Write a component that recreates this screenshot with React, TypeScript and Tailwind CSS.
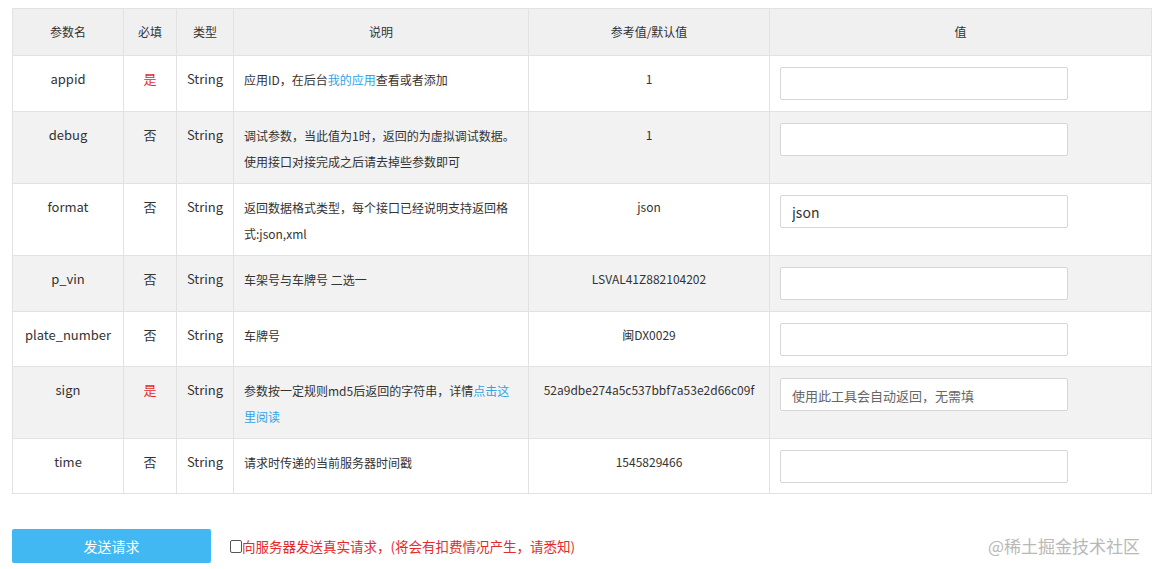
const F = { fontFamily: '"Microsoft YaHei","Noto Sans CJK SC","Liberation Sans",sans-serif' };

type Row = { name: string; req: boolean; desc: React.ReactNode; ref: string; val?: string; ph?: string; h: number; gray: boolean };

const rows: Row[] = [
  { name: 'appid', req: true, desc: <>应用ID，在后台<span className="text-[#2fa4e7]">我的应用</span>查看或者添加</>, ref: '1', h: 56, gray: false },
  { name: 'debug', req: false, desc: <>调试参数，当此值为1时，返回的为虚拟调试数据。使用接口对接完成之后请去掉些参数即可</>, ref: '1', h: 72, gray: true },
  { name: 'format', req: false, desc: <>返回数据格式类型，每个接口已经说明支持返回格式:json,xml</>, ref: 'json', val: 'json', h: 72, gray: false },
  { name: 'p_vin', req: false, desc: <>车架号与车牌号 二选一</>, ref: 'LSVAL41Z882104202', h: 56, gray: true },
  { name: 'plate_number', req: false, desc: <>车牌号</>, ref: '闽DX0029', h: 55, gray: false },
  { name: 'sign', req: true, desc: <>参数按一定规则md5后返回的字符串，详情<span className="text-[#2fa4e7]">点击这里阅读</span></>, ref: '52a9dbe274a5c537bbf7a53e2d66c09f', ph: '使用此工具会自动返回，无需填', h: 72, gray: true },
  { name: 'time', req: false, desc: <>请求时传递的当前服务器时间戳</>, ref: '1545829466', h: 55, gray: false },
];

const cell = 'border border-[#e2e2e2] align-top';

export default function App() {
  return (
    <div className="w-[1158px] h-[569px] bg-white text-[#333] text-[12px] overflow-hidden" style={F}>
      <div className="pt-[8px] px-[12px]">
        <table className="w-[1140px] border-collapse table-fixed">
          <colgroup>
            <col className="w-[111px]" /><col className="w-[53px]" /><col className="w-[57px]" />
            <col className="w-[295px]" /><col className="w-[241px]" /><col />
          </colgroup>
          <thead>
            <tr className="bg-[#f0f0f0] h-[47px]">
              {['参数名', '必填', '类型', '说明', '参考值/默认值', '值'].map(t => (
                <th key={t} className="border border-[#e2e2e2] font-normal text-center">{t}</th>
              ))}
            </tr>
          </thead>
          <tbody>
            {rows.map(r => (
              <tr key={r.name} className={r.gray ? 'bg-[#f2f2f2]' : 'bg-white'} style={{ height: r.h }}>
                <td className={`${cell} text-center pt-[13px] text-[13px]`}>{r.name}</td>
                <td className={`${cell} text-center pt-[13px] text-[13px] ${r.req ? 'text-[#e52a2a]' : ''}`}>{r.req ? '是' : '否'}</td>
                <td className={`${cell} text-center pt-[13px] text-[13px]`}>String</td>
                <td className={`${cell} px-[10px] pt-[11px] leading-[26px]`}>{r.desc}</td>
                <td className={`${cell} text-center pt-[14px]`}>{r.ref}</td>
                <td className={`${cell} px-[10px] pt-[11px]`}>
                  <input
                    defaultValue={r.val}
                    placeholder={r.ph}
                    className="w-[288px] h-[33px] bg-white border border-[#d6d6d6] rounded-[2px] px-[11px] text-[14px] text-[#333] placeholder:text-[#666] placeholder:text-[13px] outline-none"
                    style={F}
                  />
                </td>
              </tr>
            ))}
          </tbody>
        </table>
      </div>
      <div className="flex items-center mt-[35px] px-[12px]">
        <button className="w-[199px] h-[34px] bg-[#42b8f3] text-white text-[14px] rounded-[2px]" style={F}>发送请求</button>
        <label className="flex items-center ml-[19px] text-[13.5px] text-[#e52a2a]">
          <span className="inline-block w-[12px] h-[13px] border border-[#555] rounded-[2px] bg-white" />
          向服务器发送真实请求，(将会有扣费情况产生，请悉知)
        </label>
        <div className="ml-auto mr-[6px] text-[17px] text-[#b8b8b8]">@稀土掘金技术社区</div>
      </div>
    </div>
  );
}
